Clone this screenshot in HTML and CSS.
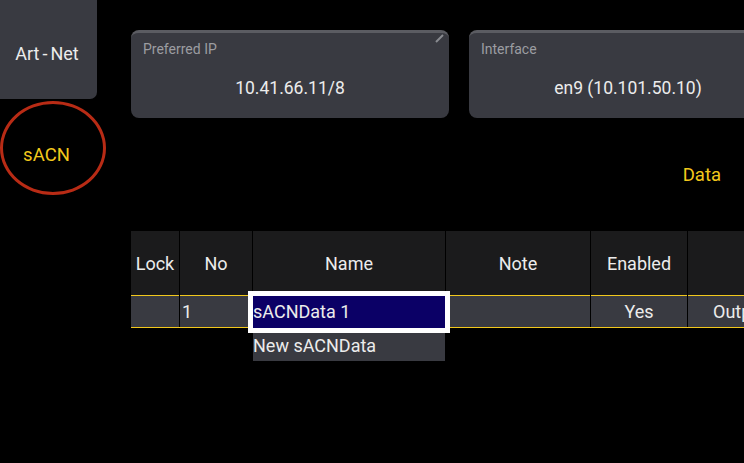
FILE: index.html
```html
<!DOCTYPE html>
<html lang="en">
<head>
  <meta charset="UTF-8">
  <title>DMX Protocols</title>
  <link rel="stylesheet" href="styles.css">
</head>
<body>
  <div class="screen">
    <div class="sidebar">
      <div class="tab">Art<span class="hy">-</span>Net</div>
      <div class="tab-item active">
        <span class="ring"></span>
        sACN
      </div>
    </div>

    <div class="main">
      <div class="fields">
        <div class="field">
          <div class="field-label">Preferred IP</div>
          <div class="field-value">10.41.66.11/8</div>
          <svg class="edit-mark" width="10" height="10" viewBox="0 0 10 10">
            <path d="M1 9 L8 2" stroke="#8a8b90" stroke-width="2"/>
          </svg>
        </div>
        <div class="field">
          <div class="field-label">Interface</div>
          <div class="field-value">en9 (10.101.50.10)</div>
        </div>
      </div>

      <div class="section-title">Data</div>

      <div class="grid">
        <div class="head">Lock</div>
        <div class="head">No</div>
        <div class="head">Name</div>
        <div class="head">Note</div>
        <div class="head">Enabled</div>
        <div class="head"></div>

        <div class="cell"></div>
        <div class="cell left">1</div>
        <div class="cell editing">
          <div class="editor">sACNData 1</div>
          <div class="suggest">New sACNData</div>
        </div>
        <div class="cell"></div>
        <div class="cell">Yes</div>
        <div class="cell clip">Output</div>
      </div>
    </div>
  </div>
</body>
</html>
```

FILE: styles.css
```css
body {
  margin: 0;
  padding: 0;
  background: #000;
  overflow: hidden;
  font-family: Roboto, "Liberation Sans", sans-serif;
  color: #ececec;
}

.screen {
  display: flex;
  width: 744px;
  height: 463px;
}

/* left tabs */
.sidebar {
  width: 97px;
  display: flex;
  flex-direction: column;
  flex-shrink: 0;
}

.tab {
  height: 99px;
  background: #393a41;
  border-bottom-right-radius: 7px;
  display: flex;
  align-items: center;
  justify-content: center;
  font-size: 18px;
  padding-top: 7px;
  padding-right: 3px;
  box-sizing: border-box;
}

.hy {
  margin: 0 3px;
}

.tab-item {
  position: relative;
  height: 100px;
  display: flex;
  align-items: center;
  justify-content: center;
  font-size: 18.5px;
  padding-right: 4px;
  padding-top: 12px;
  box-sizing: border-box;
}

.tab-item.active {
  color: #f2c81c;
}

.ring {
  position: absolute;
  left: 0;
  top: 2px;
  width: 100px;
  height: 88px;
  border: 3px solid #b82b15;
  border-radius: 50%;
}

/* main area */
.main {
  flex: 1;
  padding-left: 34px;
  padding-top: 30px;
  overflow: hidden;
}

.fields {
  display: flex;
  gap: 20px;
}

.field {
  position: relative;
  width: 318px;
  height: 88px;
  flex-shrink: 0;
  background: #393a41;
  border-top: 3px solid #5b5c62;
  border-radius: 8px;
  box-sizing: border-box;
  padding: 8px 12px 0;
}

.field-label {
  font-size: 14px;
  color: #9c9da1;
  height: 24px;
}

.field-value {
  text-align: center;
  font-size: 17.5px;
  padding-top: 13px;
}

.edit-mark {
  position: absolute;
  right: 4px;
  top: 0;
}

.section-title {
  color: #f2c81c;
  font-size: 18.5px;
  text-align: right;
  padding-right: 23px;
  margin-top: 46px;
  height: 22px;
}

/* table */
.grid {
  margin-top: 45px;
  display: grid;
  grid-template-columns: 48px 72px 192px 144px 96px 120px;
  grid-template-rows: 65px 31px;
  column-gap: 1px;
  width: 700px;
  border-bottom: 1px solid #f2c81c;
}

.head {
  background: #1b1b1c;
  display: flex;
  align-items: center;
  justify-content: center;
  font-size: 18px;
  border-bottom: 1px solid #f2c81c;
}

.cell {
  background: #393a41;
  display: flex;
  align-items: center;
  justify-content: center;
  font-size: 18px;
}

.cell.left {
  justify-content: flex-start;
  padding-left: 2px;
}

.cell.clip {
  justify-content: flex-start;
  padding-left: 25px;
}

.cell.editing {
  position: relative;
  background: #0b0066;
}

.editor {
  position: absolute;
  left: -5px;
  top: -5px;
  width: 192px;
  height: 32px;
  border: 5px solid #fff;
  background: #0b0066;
  font-size: 18px;
  line-height: 31px;
  box-sizing: content-box;
}

.suggest {
  position: absolute;
  left: 0;
  top: 37px;
  width: 192px;
  height: 28px;
  background: #393a41;
  font-size: 18px;
  line-height: 26px;
}
```
